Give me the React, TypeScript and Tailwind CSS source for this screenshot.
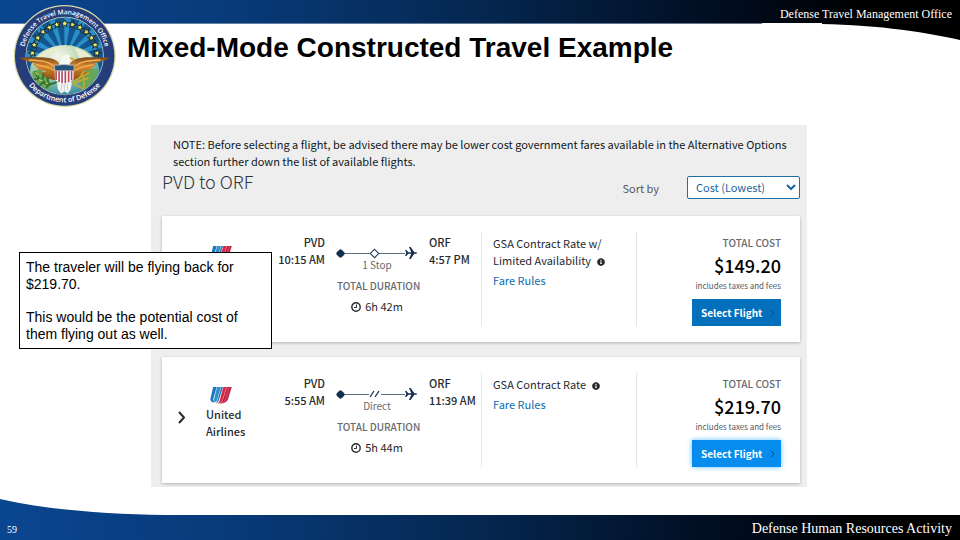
import { FaInfoCircle } from "react-icons/fa";

type Flight = {
	id: string;
	airline?: string;
	depart: string;
	arrive: string;
	stops: string;
	duration: string;
	fare: string;
	cost: string;
	active?: boolean;
};

const flights: Flight[] = [
	{
		id: "outbound-1",
		depart: "10:15 AM",
		arrive: "4:57 PM",
		stops: "1 Stop",
		duration: "6h 42m",
		fare: "GSA Contract Rate w/ Limited Availability",
		cost: "$149.20",
	},
	{
		id: "outbound-2",
		airline: "United Airlines",
		depart: "5:55 AM",
		arrive: "11:39 AM",
		stops: "Direct",
		duration: "5h 44m",
		fare: "GSA Contract Rate",
		cost: "$219.70",
		active: true,
	},
];

// angles in degrees, 0 is straight up
const stars = [-85, -70, -56, -42, -28, -14, 0, 14, 28, 42, 56, 70, 85];
const rays = [-84, -62, -40, -18, 4, 26, 48, 70];

function Seal() {
	return (
		<svg viewBox="38 8 316 322" className="w-full" role="img" aria-label="Defense Travel Management Office seal">
			<defs>
				<radialGradient id="globe" cx="0.4" cy="0.2" r="0.9">
					<stop offset="0" stopColor="#f4f7ea" />
					<stop offset="0.4" stopColor="#b5d4ae" />
					<stop offset="0.75" stopColor="#4f9fa8" />
					<stop offset="1" stopColor="#20659b" />
				</radialGradient>
				<linearGradient id="wing" x1="0" y1="0" x2="0" y2="1">
					<stop offset="0" stopColor="#7c4a1c" />
					<stop offset="0.4" stopColor="#d8892c" />
					<stop offset="1" stopColor="#8a4c16" />
				</linearGradient>
				<clipPath id="inner">
					<circle cx="195" cy="169" r="117" />
				</clipPath>
				<path id="ringTop" d="M70 169a125 127 0 0 1 250 0" />
				<path id="ringBottom" d="M54 169a141 141 0 0 0 282 0" />
			</defs>
			<circle cx="195" cy="169" r="155" fill="#d9d9a8" />
			<circle cx="195" cy="169" r="151" fill="#263d7c" />
			<circle cx="195" cy="169" r="119" fill="#d6dfc0" />
			<g clipPath="url(#inner)">
				<rect x="70" y="40" width="250" height="260" fill="#12568f" />
				{rays.map((a) => (
					<path key={a} d="M195 175L182 20h26z" fill="#2a8fc9" transform={`rotate(${a} 195 175)`} />
				))}
				<ellipse cx="195" cy="216" rx="106" ry="80" fill="url(#globe)" />
				<path d="M106 180c22-26 48-36 77-37l-18 18-25 6-14 18zM226 145c28 6 45 19 58 35l-26-8-18 5z" fill="#e8edcf" />
				<path d="M96 218l24-10 22 20 12 34-18 20c-26-14-38-36-40-64zM250 204l46 6c-4 30-18 51-43 66l-15-28z" fill="#65a65b" />
			</g>
			{stars.map((a) => (
				<g key={a} transform={`rotate(${a} 195 169)`}>
					<path
						d="M195 59l3 7 8 1-6 5 2 8-7-4-7 4 2-8-6-5 8-1z"
						fill="#f0ea6e"
						stroke="#1b2d33"
						strokeWidth="3"
					/>
				</g>
			))}
			<path d="M56 175c44-2 84-4 106 4 12 6 20 14 24 28l-17 35c-18 0-38-9-49-23 8 1 14 0 19-3-20-3-32-12-39-23l20 3c-20-5-46-13-64-21z" fill="url(#wing)" />
			<path d="M334 175c-44-2-84-4-106 4-12 6-20 14-24 28l17 35c18 0 38-9 49-23-8 1-14 0-19-3 20-3 32-12 39-23l-20 3c20-5 46-13 64-21z" fill="url(#wing)" />
			<path d="M86 181c34 2 58 3 76 18M108 195c24 4 40 7 56 18M304 181c-34 2-58 3-76 18M282 195c-24 4-40 7-56 18" fill="none" stroke="#f3b257" strokeWidth="4" />
			<path d="M178 199l4-20 11-13 14-1 9 8 3 12-8-2-2 16z" fill="#f5f7f5" />
			<path d="M209 171l13 5 4 9-13-5z" fill="#d9a62c" />
			<path d="M172 250l22-8 23 8-4 20-8 12-11-5-10 6-10-14z" fill="#f3f5f1" />
			<path d="M187 254l-3 20M194 254v22M202 254l3 20" stroke="#b0b9c1" strokeWidth="2" />
			<path d="M165 213h57v22c0 11-13 16-28 19-16-3-29-8-29-19z" fill="#fff" />
			<path d="M169 213v29M178 213v35M187 213v39M197 213v39M207 213v36M216 213v30" stroke="#b5485c" strokeWidth="5" />
			<path d="M164 196c10 3 19-1 30-1s20 4 30 1l-1 18h-58z" fill="#24527c" stroke="#d3dbe0" strokeWidth="2" />
			<path d="M168 249c-24 12-45 4-61-27M112 230l-7-12M121 240l-17-1M133 247l-13 10M128 238l3-14M145 250l-2-15M151 253l-12 12" fill="none" stroke="#31722e" strokeWidth="6" strokeLinecap="round" />
			<path d="M106 218l7 9M117 240l10 6M137 251l8 2" stroke="#c9cf46" strokeWidth="4" />
			<path d="M221 245l48-24M224 250l42-13M222 254l30 15M240 236l13-20M252 234l3 30" fill="none" stroke="#c3a92f" strokeWidth="5" strokeLinecap="round" />
			<g fill="#fff" className="font-['Open_Sans',sans-serif] text-[20px] font-semibold">
				<text textAnchor="middle">
					<textPath href="#ringTop" startOffset="50%">Defense Travel Management Office</textPath>
				</text>
				<text textAnchor="middle" className="text-[22px]">
					<textPath href="#ringBottom" startOffset="50%">Department of Defense</textPath>
				</text>
			</g>
		</svg>
	);
}

function Header() {
	return (
		<header className="relative h-10">
			<svg viewBox="0 0 960 40" preserveAspectRatio="none" className="absolute inset-0 h-full w-full" aria-hidden="true">
				<defs>
					<linearGradient id="bar">
						<stop offset="0" stopColor="#0a4690" />
						<stop offset="0.25" stopColor="#083a78" />
						<stop offset="0.5" stopColor="#052750" />
						<stop offset="0.75" stopColor="#010d20" />
						<stop offset="0.9" stopColor="#000" />
					</linearGradient>
				</defs>
				<path d="M0 0h960v40C920 31 870 24 810 24H0z" fill="url(#bar)" />
				<path d="M0 23.500h762" stroke="#8da0b8" strokeOpacity="0.7" />
				<path d="M762 23.500h60" stroke="#fff" />
			</svg>
			<p className="relative pr-2 pt-1 text-right font-['Liberation_Serif',serif] text-[12px] leading-5 text-white">
				Defense Travel Management Office
			</p>
			<div className="absolute left-[13px] top-[3px] w-[104px]">
				<Seal />
			</div>
		</header>
	);
}

function UnitedLogo() {
	return (
		<svg viewBox="0 0 66 52" className="h-[17px] w-[22px]" aria-hidden="true">
			<path d="M9 0h11L10 34c-2 6 0 10 5 13C4 48-1 42 1 34z" fill="#1d77bd" />
			<path d="M21 0h12L21 40c-1 4-3 6-6 6-4-2-4-6-3-11z" fill="#3391cf" />
			<path d="M34 0h5L27 39c-2 6-5 10-12 11 5-2 6-6 8-12z" fill="#2575b5" />
			<path d="M40 0h10L38 39c-2 7-8 11-15 12 4-4 5-7 7-13z" fill="#d92843" />
			<path d="M51 0h15L55 35c-3 10-10 15-27 16 7-3 9-6 11-13z" fill="#c51f40" />
			<path d="M59 0L47 37c-2 6-5 10-10 13" fill="none" stroke="#f0c3cc" strokeWidth="1" />
		</svg>
	);
}

function Route({ direct }: { direct: boolean }) {
	return (
		<div className="flex h-3 items-center text-[#14304f]">
			<span className="size-[7px] rotate-45 rounded-[2px] bg-[#14304f]" />
			<span className="h-px flex-1 bg-[#5b6f85]" />
			{direct ? (
				<svg viewBox="0 0 12 8" className="h-2 w-3" fill="none" stroke="currentColor" aria-hidden="true">
					<path d="M1 7l4-6M6 7l4-6" strokeWidth="1.300" />
				</svg>
			) : (
				<span className="size-[7px] rotate-45 border border-current bg-white" />
			)}
			<span className="h-px flex-1 bg-[#5b6f85]" />
			<svg viewBox="0 0 36 36" className="size-3" fill="currentColor" aria-hidden="true">
				<path d="M0 9h4l6 7h9L12 0h5l11 16h5c4 0 4 4 0 4h-5L17 36h-5l7-16h-9l-6 7H0l4-9z" />
			</svg>
		</div>
	);
}

function FlightCard({ flight }: { flight: Flight }) {
	return (
		<article className="grid grid-cols-[319fr_155fr_164fr] bg-white py-4 text-[11px] leading-[17px] text-[#26292e] shadow-[0_1px_3px_rgba(0,0,0,0.25)]">
			<div className="flex min-h-[94px] pr-1">
				<button type="button" aria-label="Show flight details" className="mb-[6px] flex w-10 items-center justify-center">
					<svg viewBox="0 0 8 13" className="h-[13px] w-2" fill="none" stroke="currentColor" strokeWidth="2" aria-hidden="true">
						<path d="M1 1l5 5.500L1 12" />
					</svg>
				</button>
				<div className="w-[58px] pl-1 pt-[14px] font-medium">
					<div className="pl-1">
						<UnitedLogo />
					</div>
					{flight.airline && <p className="pt-[2px]">{flight.airline}</p>}
				</div>
				<div className="flex-1 pt-[2px] text-right font-medium">
					<p>PVD</p>
					<p>{flight.depart}</p>
				</div>
				<div className="mx-3 w-20 whitespace-nowrap pt-[15px] text-center">
					<Route direct={flight.stops === "Direct"} />
					<p className="text-[10px] leading-3 text-[#666a70]">{flight.stops}</p>
					<p className="pt-[7px] text-[10px] font-medium leading-4 text-[#666a70]">TOTAL DURATION</p>
					<p className="flex items-center justify-center gap-1 pt-1">
						<svg viewBox="0 0 10 10" className="size-[10px]" fill="none" stroke="currentColor" aria-hidden="true">
							<circle cx="5" cy="5" r="4.200" strokeWidth="1.400" />
							<path d="M5.500 2.500v3H3" />
						</svg>
						{flight.duration}
					</p>
				</div>
				<div className="w-[48px] whitespace-nowrap pt-[2px] font-medium">
					<p>ORF</p>
					<p>{flight.arrive}</p>
				</div>
			</div>
			<div className="border-l border-[#e6e6e6] pl-[11px] pr-6 pt-[3px]">
				<p>
					{flight.fare}
					<FaInfoCircle className="ml-[6px] inline size-2" />
				</p>
				<a href="#fare-rules" className="mt-[3px] block text-[#0b6cb0]">
					Fare Rules
				</a>
			</div>
			<div className="flex flex-col items-end border-l border-[#e6e6e6] pr-[19px] pt-[3px]">
				<p className="text-[10px] font-medium leading-4 text-[#666a70]">TOTAL COST</p>
				<p className="text-[18px] font-medium leading-[29px] text-black">{flight.cost}</p>
				<p className="text-[8px] leading-3 text-[#55585d]">includes taxes and fees</p>
				<button
					type="button"
					className={
						flight.active
							? "mt-[7px] flex h-[27px] w-[89px] items-center gap-2 whitespace-nowrap bg-[#058ced] pl-[9px] text-[10px] font-bold text-white shadow-[0_0_5px_#5cc0ff]"
							: "mt-[7px] flex h-[27px] w-[89px] items-center gap-2 whitespace-nowrap bg-[#0270bd] pl-[9px] text-[10px] font-bold text-white"
					}
				>
					Select Flight
					<svg viewBox="0 0 5 8" className="h-2 w-[5px]" fill="none" stroke="#17476b" aria-hidden="true">
						<path d="M1 1l3 3-3 3" />
					</svg>
				</button>
			</div>
		</article>
	);
}

export default function App() {
	return (
		<div className="flex min-h-screen flex-col bg-white">
			<Header />
			<h1 className="pl-[127px] font-['Liberation_Sans',sans-serif] text-[28px] font-bold leading-4 text-black">
				Mixed-Mode Constructed Travel Example
			</h1>
			<main className="relative ml-[151px] mr-[153px] mt-[69px] bg-[#eee] pb-1 pl-[11px] pr-[7px] pt-[11px] font-['Noto_Sans_CJK_SC',sans-serif]">
				<p className="pl-[11px] text-[11px] leading-[17px] text-[#101822]">
					NOTE: Before selecting a flight, be advised there may be lower cost government fares available in the Alternative
					Options <br />
					section further down the list of available flights.
				</p>
				<div className="mb-[17px] flex items-start">
					<h2 className="flex-1 text-[18px] font-light leading-[22px] text-[#2c3440]">PVD to ORF</h2>
					<label htmlFor="sort" className="mr-7 mt-[10px] text-[11px] leading-4 text-[#55595f]">
						Sort by
					</label>
					<div className="relative mt-[6px]">
						<select
							id="sort"
							className="block h-[23px] w-[113px] appearance-none rounded-[2px] border border-[#1e6fa8] bg-white pl-2 text-[11px] text-[#1b659c]"
						>
							<option>Cost (Lowest)</option>
						</select>
						<svg viewBox="0 0 10 7" className="pointer-events-none absolute right-1 top-2 h-[7px] w-[10px]" fill="none" stroke="#1b659c" strokeWidth="2" aria-hidden="true">
							<path d="M1 1l4 4 4-4" />
						</svg>
					</div>
				</div>
				<div className="flex flex-col gap-[15px]">
					{flights.map((flight) => (
						<FlightCard key={flight.id} flight={flight} />
					))}
				</div>
				<aside className="absolute left-[-132px] top-[127px] w-[253px] border border-black bg-white pb-[5px] pl-[6px] pr-6 pt-[6px] font-['Liberation_Sans',sans-serif] text-[14px] leading-[17px] text-black">
					<p>The traveler will be flying back for $219.70.</p>
					<p className="mt-4">This would be the potential cost of them flying out as well.</p>
				</aside>
			</main>
			<footer className="relative mt-auto h-[41px] font-['Liberation_Serif',serif] text-white">
				<svg viewBox="0 0 960 41" preserveAspectRatio="none" className="absolute inset-0 h-full w-full" aria-hidden="true">
					<path d="M0 0C48 11 106 15 165 16H960V41H0z" fill="url(#bar)" />
				</svg>
				<div className="relative flex items-center justify-between pl-[7px] pr-2 pt-5">
					<span className="text-[10px]">59</span>
					<span className="text-[14px] leading-5">Defense Human Resources Activity</span>
				</div>
			</footer>
		</div>
	);
}
